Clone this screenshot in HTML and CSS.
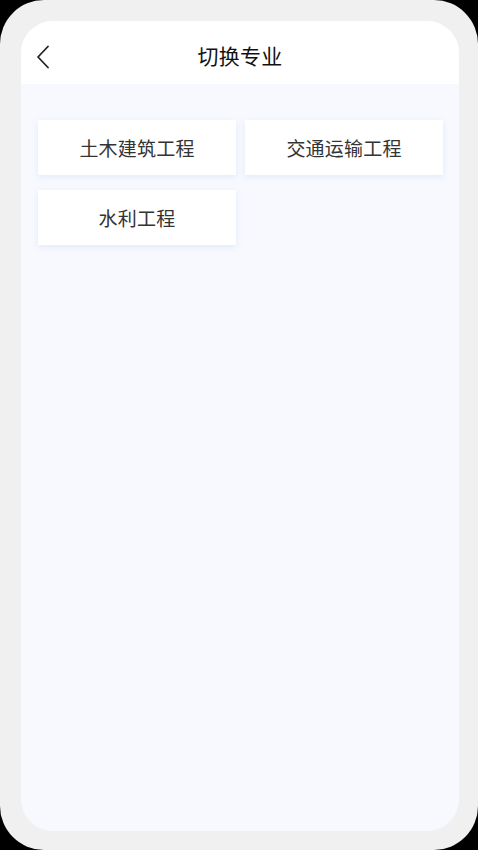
FILE: index.html
```html
<!DOCTYPE html>
<html lang="zh-CN">
<head>
<meta charset="utf-8">
<link rel="stylesheet" href="styles.css">
</head>
<body>
<div class="device">
  <div class="screen">
    <header class="header">
      <button class="back" aria-label="返回">
        <svg width="14" height="24" viewBox="0 0 14 24"><path d="M12 1.5 L2 12 L12 22.5" fill="none" stroke="#222" stroke-width="1.8" stroke-linecap="round" stroke-linejoin="round"/></svg>
      </button>
      <h1 class="title">切换专业</h1>
    </header>
    <main class="content">
      <div class="grid">
        <div class="card">土木建筑工程</div>
        <div class="card">交通运输工程</div>
        <div class="card">水利工程</div>
      </div>
    </main>
  </div>
</div>
</body>
</html>
```
FILE: styles.css
```css
html, body {
  margin: 0;
  padding: 0;
  background: #000;
}
body {
  width: 478px;
  height: 850px;
  font-family: "Noto Sans CJK SC", "Noto Sans", sans-serif;
}
.device {
  width: 478px;
  height: 850px;
  box-sizing: border-box;
  background: #f0f0f0;
  border-radius: 44px;
  padding: 21px 19px 19px 21px;
}
.screen {
  height: 100%;
  background: #f7f9fe;
  border-radius: 32px;
  overflow: hidden;
  display: flex;
  flex-direction: column;
}
.header {
  height: 63px;
  box-sizing: border-box;
  padding-top: 4px;
  flex: none;
  background: #fff;
  display: flex;
  align-items: center;
  justify-content: center;
  position: relative;
}
.back {
  position: absolute;
  left: 14px;
  top: 23px;
  border: 0;
  background: none;
  padding: 0;
  width: 16px;
  height: 26px;
  display: flex;
  align-items: center;
  justify-content: center;
}
.title {
  margin: 0;
  font-size: 21px;
  font-weight: 400;
  color: #111;
  letter-spacing: 0.2px;
}
.content {
  flex: 1;
  padding: 36px 16px 0 17px;
}
.grid {
  display: grid;
  grid-template-columns: 198px 198px;
  column-gap: 9px;
  row-gap: 15px;
}
.card {
  height: 55px;
  background: #fff;
  display: flex;
  align-items: center;
  justify-content: center;
  font-size: 19px;
  color: #333;
  box-shadow: 0 2px 6px rgba(190, 205, 235, 0.35);
  letter-spacing: 0.2px;
}
```
